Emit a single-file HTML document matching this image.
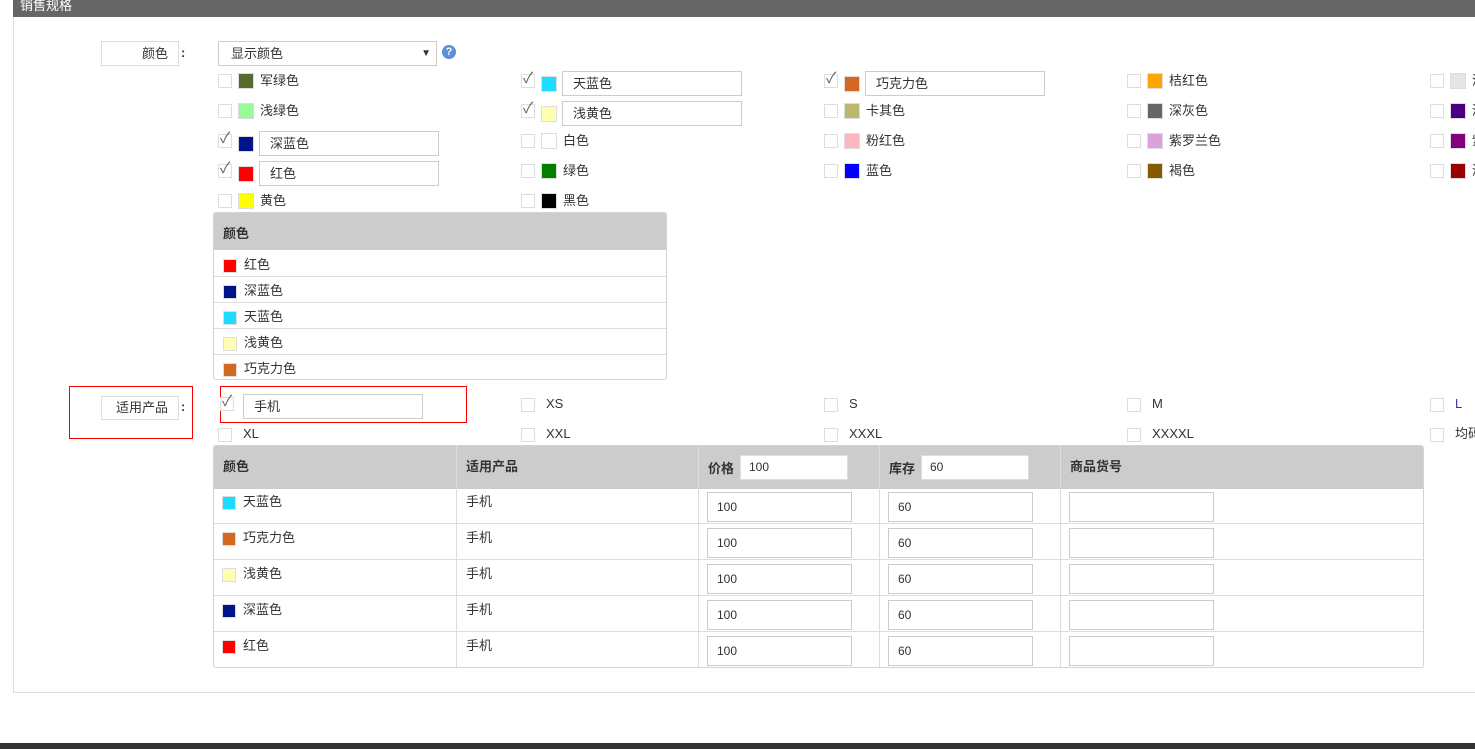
<!DOCTYPE html>
<html><head><meta charset="utf-8"><style>
*{margin:0;padding:0;box-sizing:border-box}
body{width:1475px;height:749px;overflow:hidden;background:#fff;position:relative;font-family:"Liberation Sans","Noto Sans CJK SC",sans-serif;font-size:13px;color:#333}
div,span{position:absolute}
.cb{width:14px;height:14px;border:1px solid #ddd;background:#fff}
.ck{font-size:15px;color:#666;line-height:14px;left:1px;top:-3px}
.sw{width:16px;height:16px;border:1px solid #ddd}
.t{line-height:16px;white-space:nowrap}
.in{height:25px;border:1px solid #ccc;background:#fff;padding-left:10px;line-height:23px;white-space:nowrap}
.tb{border:1px solid #d4d4d4;border-radius:3px;overflow:hidden;background:#fff}
.hd{background:#ccc;font-weight:bold}
.hl{height:1px;background:#ddd}
.vl{width:1px;background:#ddd}
.ti{height:30px;width:145px;border:1px solid #ccc;background:#fff;padding-left:9px;line-height:28px;font-size:12px}
.s14{width:14px;height:14px;border:1px solid #ddd}
</style></head><body>
<div style="left:13px;top:0;width:1462px;height:17px;background:#666"></div>
<div style="left:20px;top:-5px;color:#fff;font-size:13px">销售规格</div>
<div style="left:13px;top:17px;width:1px;height:676px;background:#ddd"></div>
<div style="left:13px;top:692px;width:1462px;height:1px;background:#ddd"></div>
<div style="left:0;top:743px;width:1475px;height:6px;background:#333"></div>

<div style="left:101px;top:41px;width:78px;height:25px;border:1px solid #ddd;text-align:right;padding-right:10px;line-height:23px">颜色</div>
<div style="left:181px;top:45px;font-weight:bold">:</div>
<div style="left:218px;top:41px;width:219px;height:25px;border:1px solid #ccc;padding-left:12px;line-height:24px">显示颜色<span style="right:5px;top:0;font-size:10px">▼</span></div>
<div style="left:442px;top:45px;width:14px;height:14px;border-radius:50%;background:#5b8fd6;color:#fff;font-size:11px;font-weight:bold;text-align:center;line-height:14px">?</div>

<!-- col0 -->
<div class="cb" style="left:218px;top:74px"></div><div class="sw" style="left:238px;top:73px;background:#556b2f"></div><div class="t" style="left:260px;top:73px">军绿色</div>
<div class="cb" style="left:218px;top:104px"></div><div class="sw" style="left:238px;top:103px;background:#98fb98"></div><div class="t" style="left:260px;top:103px">浅绿色</div>
<div class="cb" style="left:218px;top:134px"><span class="ck">✓</span></div><div class="sw" style="left:238px;top:136px;background:#001489"></div><div class="in" style="left:259px;top:131px;width:180px">深蓝色</div>
<div class="cb" style="left:218px;top:164px"><span class="ck">✓</span></div><div class="sw" style="left:238px;top:166px;background:#f00"></div><div class="in" style="left:259px;top:161px;width:180px">红色</div>
<div class="cb" style="left:218px;top:194px"></div><div class="sw" style="left:238px;top:193px;background:#ff0"></div><div class="t" style="left:260px;top:193px">黄色</div>
<!-- col1 -->
<div class="cb" style="left:521px;top:74px"><span class="ck">✓</span></div><div class="sw" style="left:541px;top:76px;background:#1edcff"></div><div class="in" style="left:562px;top:71px;width:180px">天蓝色</div>
<div class="cb" style="left:521px;top:104px"><span class="ck">✓</span></div><div class="sw" style="left:541px;top:106px;background:#ffffb4"></div><div class="in" style="left:562px;top:101px;width:180px">浅黄色</div>
<div class="cb" style="left:521px;top:134px"></div><div class="sw" style="left:541px;top:133px;background:#fff"></div><div class="t" style="left:563px;top:133px">白色</div>
<div class="cb" style="left:521px;top:164px"></div><div class="sw" style="left:541px;top:163px;background:#008000"></div><div class="t" style="left:563px;top:163px">绿色</div>
<div class="cb" style="left:521px;top:194px"></div><div class="sw" style="left:541px;top:193px;background:#000"></div><div class="t" style="left:563px;top:193px">黑色</div>
<!-- col2 -->
<div class="cb" style="left:824px;top:74px"><span class="ck">✓</span></div><div class="sw" style="left:844px;top:76px;background:#d2691e"></div><div class="in" style="left:865px;top:71px;width:180px">巧克力色</div>
<div class="cb" style="left:824px;top:104px"></div><div class="sw" style="left:844px;top:103px;background:#bdb76b"></div><div class="t" style="left:866px;top:103px">卡其色</div>
<div class="cb" style="left:824px;top:134px"></div><div class="sw" style="left:844px;top:133px;background:#ffb6c1"></div><div class="t" style="left:866px;top:133px">粉红色</div>
<div class="cb" style="left:824px;top:164px"></div><div class="sw" style="left:844px;top:163px;background:#00f"></div><div class="t" style="left:866px;top:163px">蓝色</div>
<!-- col3 -->
<div class="cb" style="left:1127px;top:74px"></div><div class="sw" style="left:1147px;top:73px;background:#ffa500"></div><div class="t" style="left:1169px;top:73px">桔红色</div>
<div class="cb" style="left:1127px;top:104px"></div><div class="sw" style="left:1147px;top:103px;background:#666"></div><div class="t" style="left:1169px;top:103px">深灰色</div>
<div class="cb" style="left:1127px;top:134px"></div><div class="sw" style="left:1147px;top:133px;background:#dda0dd"></div><div class="t" style="left:1169px;top:133px">紫罗兰色</div>
<div class="cb" style="left:1127px;top:164px"></div><div class="sw" style="left:1147px;top:163px;background:#855b00"></div><div class="t" style="left:1169px;top:163px">褐色</div>
<!-- col4 -->
<div class="cb" style="left:1430px;top:74px"></div><div class="sw" style="left:1450px;top:73px;background:#e5e5e5"></div><div class="t" style="left:1472px;top:73px">浅灰色</div>
<div class="cb" style="left:1430px;top:104px"></div><div class="sw" style="left:1450px;top:103px;background:#4b0082"></div><div class="t" style="left:1472px;top:103px">深紫色</div>
<div class="cb" style="left:1430px;top:134px"></div><div class="sw" style="left:1450px;top:133px;background:#800080"></div><div class="t" style="left:1472px;top:133px">紫色</div>
<div class="cb" style="left:1430px;top:164px"></div><div class="sw" style="left:1450px;top:163px;background:#900"></div><div class="t" style="left:1472px;top:163px">深红色</div>

<!-- color table -->
<div class="tb" style="left:213px;top:212px;width:454px;height:168px">
 <div class="hd" style="left:0;top:0;width:454px;height:37px;padding:10px 0 0 9px">颜色</div>
 <div class="s14" style="left:9px;top:46px;background:#f00"></div><div class="t" style="left:30px;top:44px">红色</div>
 <div class="hl" style="left:0;top:63px;width:454px"></div>
 <div class="s14" style="left:9px;top:72px;background:#001489"></div><div class="t" style="left:30px;top:70px">深蓝色</div>
 <div class="hl" style="left:0;top:89px;width:454px"></div>
 <div class="s14" style="left:9px;top:98px;background:#1edcff"></div><div class="t" style="left:30px;top:96px">天蓝色</div>
 <div class="hl" style="left:0;top:115px;width:454px"></div>
 <div class="s14" style="left:9px;top:124px;background:#ffffb4"></div><div class="t" style="left:30px;top:122px">浅黄色</div>
 <div class="hl" style="left:0;top:141px;width:454px"></div>
 <div class="s14" style="left:9px;top:150px;background:#d2691e"></div><div class="t" style="left:30px;top:148px">巧克力色</div>
</div>

<!-- product -->
<div style="left:69px;top:386px;width:124px;height:53px;border:1px solid #f00"></div>
<div style="left:101px;top:396px;width:78px;height:24px;border:1px solid #ddd;text-align:right;padding-right:10px;line-height:22px">适用产品</div>
<div style="left:181px;top:399px;font-weight:bold">:</div>
<div style="left:220px;top:386px;width:247px;height:37px;border:1px solid #f00"></div>
<div class="cb" style="left:220px;top:397px"><span class="ck">✓</span></div>
<div class="in" style="left:243px;top:394px;width:180px">手机</div>
<div class="cb" style="left:521px;top:398px"></div><div class="t" style="left:546px;top:396px">XS</div>
<div class="cb" style="left:824px;top:398px"></div><div class="t" style="left:849px;top:396px">S</div>
<div class="cb" style="left:1127px;top:398px"></div><div class="t" style="left:1152px;top:396px">M</div>
<div class="cb" style="left:1430px;top:398px"></div><div class="t" style="left:1455px;top:396px;color:#4b2d9f">L</div>
<div class="cb" style="left:218px;top:428px"></div><div class="t" style="left:243px;top:426px">XL</div>
<div class="cb" style="left:521px;top:428px"></div><div class="t" style="left:546px;top:426px">XXL</div>
<div class="cb" style="left:824px;top:428px"></div><div class="t" style="left:849px;top:426px">XXXL</div>
<div class="cb" style="left:1127px;top:428px"></div><div class="t" style="left:1152px;top:426px">XXXXL</div>
<div class="cb" style="left:1430px;top:428px"></div><div class="t" style="left:1455px;top:426px">均码</div>

<!-- main table -->
<div class="tb" style="left:213px;top:445px;width:1211px;height:223px">
 <div class="hd" style="left:0;top:0;width:1211px;height:43px"></div>
 <div class="t" style="left:9px;top:13px;font-weight:bold">颜色</div>
 <div class="t" style="left:252px;top:13px;font-weight:bold">适用产品</div>
 <div class="t" style="left:494px;top:15px;font-weight:bold">价格</div>
 <div style="left:526px;top:9px;width:108px;height:25px;background:#fff;border:1px solid #ddd;padding-left:8px;line-height:23px;font-size:12px">100</div>
 <div class="t" style="left:675px;top:15px;font-weight:bold">库存</div>
 <div style="left:707px;top:9px;width:108px;height:25px;background:#fff;border:1px solid #ddd;padding-left:8px;line-height:23px;font-size:12px">60</div>
 <div class="t" style="left:856px;top:13px;font-weight:bold">商品货号</div>
 <div class="vl" style="left:242px;top:0;height:223px"></div>
 <div class="vl" style="left:484px;top:0;height:223px"></div>
 <div class="vl" style="left:665px;top:0;height:223px"></div>
 <div class="vl" style="left:846px;top:0;height:223px"></div>
</div>
<div id="rows"></div>
<div class="hl" style="left:214px;top:523px;width:1209px"></div>
<div class="hl" style="left:214px;top:559px;width:1209px"></div>
<div class="hl" style="left:214px;top:595px;width:1209px"></div>
<div class="hl" style="left:214px;top:631px;width:1209px"></div>

<div class="s14" style="left:222px;top:496px;background:#1edcff"></div><div class="t" style="left:243px;top:494px">天蓝色</div><div class="t" style="left:466px;top:494px">手机</div>
<div class="ti" style="left:707px;top:492px">100</div><div class="ti" style="left:888px;top:492px">60</div><div class="ti" style="left:1069px;top:492px"></div>
<div class="s14" style="left:222px;top:532px;background:#d2691e"></div><div class="t" style="left:243px;top:530px">巧克力色</div><div class="t" style="left:466px;top:530px">手机</div>
<div class="ti" style="left:707px;top:528px">100</div><div class="ti" style="left:888px;top:528px">60</div><div class="ti" style="left:1069px;top:528px"></div>
<div class="s14" style="left:222px;top:568px;background:#ffffb4"></div><div class="t" style="left:243px;top:566px">浅黄色</div><div class="t" style="left:466px;top:566px">手机</div>
<div class="ti" style="left:707px;top:564px">100</div><div class="ti" style="left:888px;top:564px">60</div><div class="ti" style="left:1069px;top:564px"></div>
<div class="s14" style="left:222px;top:604px;background:#001489"></div><div class="t" style="left:243px;top:602px">深蓝色</div><div class="t" style="left:466px;top:602px">手机</div>
<div class="ti" style="left:707px;top:600px">100</div><div class="ti" style="left:888px;top:600px">60</div><div class="ti" style="left:1069px;top:600px"></div>
<div class="s14" style="left:222px;top:640px;background:#f00"></div><div class="t" style="left:243px;top:638px">红色</div><div class="t" style="left:466px;top:638px">手机</div>
<div class="ti" style="left:707px;top:636px">100</div><div class="ti" style="left:888px;top:636px">60</div><div class="ti" style="left:1069px;top:636px"></div>
</body></html>
